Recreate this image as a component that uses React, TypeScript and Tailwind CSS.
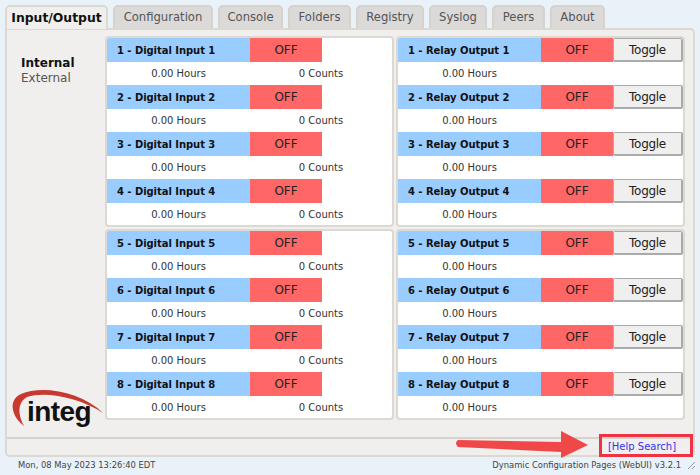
const tabs = [
  { label: "Configuration", w: "w-[100px]" },
  { label: "Console", w: "w-[65px]" },
  { label: "Folders", w: "w-[63px]" },
  { label: "Registry", w: "w-[68px]" },
  { label: "Syslog", w: "w-[58px]" },
  { label: "Peers", w: "w-[53px]" },
  { label: "About", w: "w-[55px]" },
];

function Logo() {
  return (
    <div className="relative w-[94px] h-[46px] ml-[4px]">
      <svg width="94" height="46" viewBox="0 0 94 46" className="absolute inset-0">
        <path d="M13 38 C0 28 -3 12 10 6 C30 -3 70 3 92 25 C68 9 34 3 16 9 C7 14 6 26 13 38 Z" fill="#c8392f" />
      </svg>
      <span className="absolute left-[16px] top-[10px] text-[28px] leading-[28px] font-bold tracking-[-0.6px] text-[#111] [font-family:'Liberation_Sans',sans-serif]">
        integ
      </span>
    </div>
  );
}

function InputRow({ n }: { n: number }) {
  return (
    <div className="h-[47px] w-full">
      <div className="flex h-[24px] items-center">
        <div className="w-[143px] h-full bg-[#99ccff] font-bold text-[10px] tracking-[-0.05px] pl-[10px] flex items-center text-[#111]">
          {n} - Digital Input {n}
        </div>
        <div className="w-[72px] h-full bg-[#ff6666] flex items-center justify-center text-[12px] text-[#222]">OFF</div>
      </div>
      <div className="flex h-[23px] items-center">
        <div className="w-[143px] text-center">0.00 Hours</div>
        <div className="w-[142px] text-center">0 Counts</div>
      </div>
    </div>
  );
}

function OutputRow({ n }: { n: number }) {
  return (
    <div className="h-[47px] w-full">
      <div className="flex h-[24px] items-center">
        <div className="w-[143px] h-full bg-[#99ccff] font-bold text-[10px] tracking-[-0.05px] pl-[10px] flex items-center text-[#111]">
          {n} - Relay Output {n}
        </div>
        <div className="w-[72px] h-full bg-[#ff6666] flex items-center justify-center text-[12px] text-[#222]">OFF</div>
        <button className="w-[70px] h-full bg-[#efefef] border border-[#aaa] border-b-2 border-r-2 rounded-[2px] text-[12px] text-[#222] [font-family:'DejaVu_Sans',sans-serif] tracking-[-0.3px]">
          Toggle
        </button>
      </div>
      <div className="flex h-[23px] items-center">
        <div className="w-[143px] text-center">0.00 Hours</div>
      </div>
    </div>
  );
}

function Group({ children }: { children: React.ReactNode }) {
  return (
    <div className="bg-white border-2 border-[#dcd8d2] rounded-[4px] w-[289px] h-[191px] overflow-hidden flex flex-col">
      {children}
    </div>
  );
}

export default function App() {
  return (
    <div className="relative w-[700px] h-[475px] bg-[#e9f1f9] overflow-hidden text-[10px] text-[#333] [font-family:'DejaVu_Sans',sans-serif]">
      <div className="flex pl-[5px] pt-[5px] h-[28px] gap-[5px] items-end">
        <div className="w-[103px] h-[24px] -mb-px z-10 bg-[#f0efee] border-2 border-b-0 border-[#dcd8d2] rounded-t-[5px] flex items-center justify-center font-bold text-[12.4px] text-[#111]">
          Input/Output
        </div>
        {tabs.map((t) => (
          <div
            key={t.label}
            className={`${t.w} h-[23px] bg-[#dcd9d9] border-2 border-b-0 border-[#d6d2cc] rounded-t-[5px] flex items-center justify-center text-[11.6px] text-[#555]`}
          >
            {t.label}
          </div>
        ))}
      </div>
      <div className="mx-[5px] h-[429px] bg-[#f0efee] border-2 border-[#dcd8d2] rounded-b-[5px] rounded-tr-[5px] flex flex-col">
        <div className="h-[409px] flex border-b-2 border-[#d6d2cc]">
          <div className="w-[98px] h-full flex flex-col justify-between pt-[26px] pb-[3px]">
            <div className="pl-[14px] leading-[15px]">
              <div className="font-bold text-[12px] text-[#111]">Internal</div>
              <div className="text-[12px] text-[#555]">External</div>
            </div>
            <Logo />
          </div>
          <div className="grid grid-cols-[289px_289px] grid-rows-[191px_191px] gap-x-[2px] gap-y-[2px] pt-[6px]">
            <Group>{[1, 2, 3, 4].map((n) => <InputRow key={n} n={n} />)}</Group>
            <Group>{[1, 2, 3, 4].map((n) => <OutputRow key={n} n={n} />)}</Group>
            <Group>{[5, 6, 7, 8].map((n) => <InputRow key={n} n={n} />)}</Group>
            <Group>{[5, 6, 7, 8].map((n) => <OutputRow key={n} n={n} />)}</Group>
          </div>
        </div>
      </div>
      <div className="flex justify-between items-center pl-[18px] pr-[4px] h-[17px] text-[8.4px] text-[#444]">
        <span>Mon, 08 May 2023 13:26:40 EDT</span>
        <span className="flex items-center gap-[6px]">
          Dynamic Configuration Pages (WebUI) v3.2.1
          <svg width="9" height="9" viewBox="0 0 9 9" stroke="#999" strokeWidth="1">
            <path d="M1 8 L8 1 M5 8 L8 5" />
          </svg>
        </span>
      </div>
      <div className="absolute left-[599px] top-[434px] w-[94px] h-[23px] border-[3px] border-[#ee3344] flex items-center justify-center whitespace-nowrap pr-[8px] pt-[2px] text-[10px] text-[#3333ee]">
        [Help Search]
      </div>
      <svg className="absolute left-[450px] top-[428px]" width="150" height="32" viewBox="0 0 150 32">
        <path d="M8 12 L111 14 L111 3 L138 17 L111 30 L111 24 L8 19 Q4 15 8 12 Z" fill="#f04848" />
      </svg>
    </div>
  );
}
